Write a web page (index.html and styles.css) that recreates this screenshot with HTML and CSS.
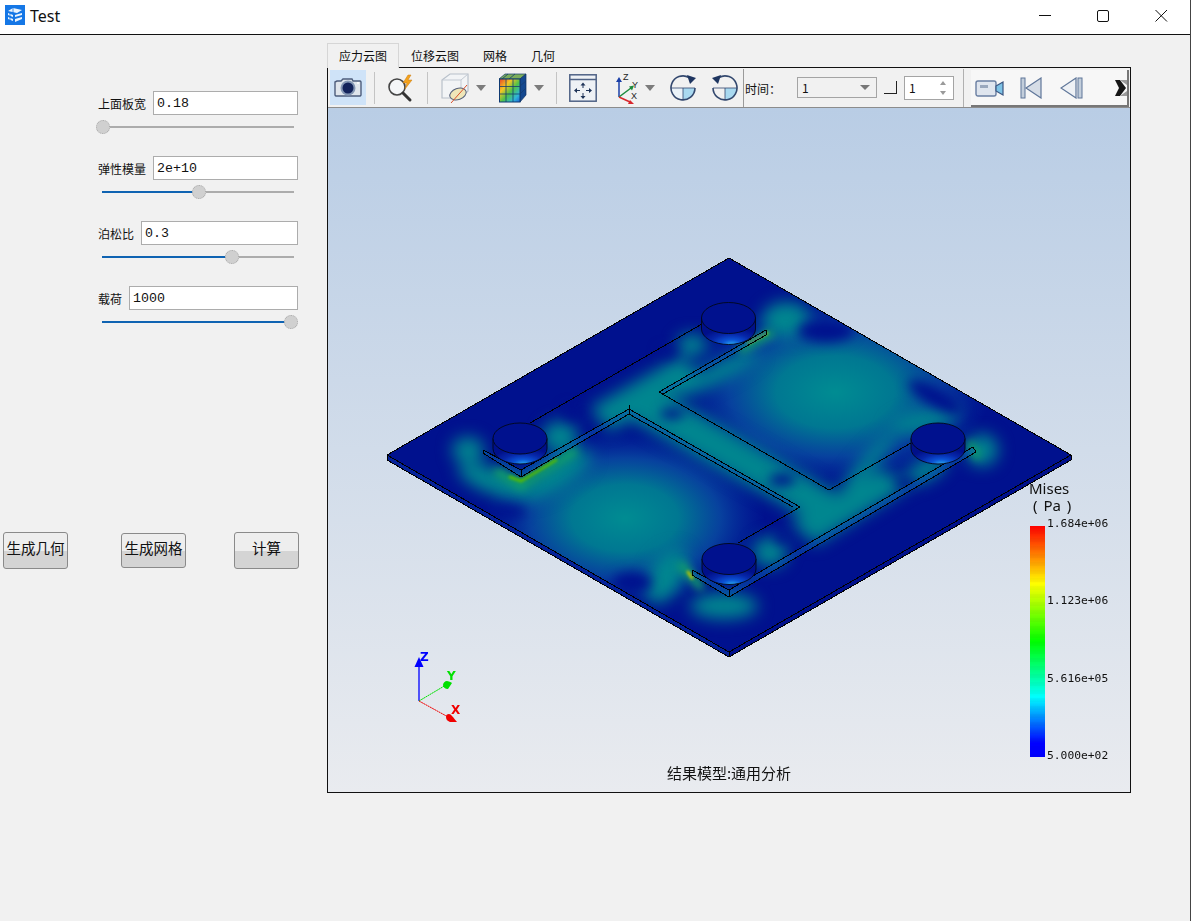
FILE: index.html
```html
<!DOCTYPE html>
<html lang="zh">
<head>
<meta charset="utf-8">
<title>Test</title>
<link rel="stylesheet" href="styles.css">
</head>
<body>
<div class="window">
  <header class="titlebar">
    <svg class="app-icon" width="20" height="20" viewBox="0 0 20 20">
      <rect width="20" height="20" fill="#1577e6"/>
      <path d="M3 6l5-3 9 2-5 3zM3 8l5 2v2l-5-2zM10 10l7-2v2l-7 2zM3 12l5 2v2l-5-2zM10 14l7-2v2l-7 3z" fill="#fff" opacity=".92"/>
      <path d="M5 8v9M8 3v6" stroke="#1577e6" stroke-width=".8"/>
    </svg>
    <span class="app-title">Test</span>
    <div class="win-controls">
      <svg width="58" height="28" viewBox="0 0 58 28"><path d="M23 14.500h12" stroke="#111" stroke-width="1"/></svg>
      <svg width="58" height="28" viewBox="0 0 58 28"><rect x="23.500" y="9.500" width="11" height="11" rx="1.500" fill="none" stroke="#111" stroke-width="1"/></svg>
      <svg width="58" height="28" viewBox="0 0 58 28"><path d="M23.500 9l11.500 11.500M35 9L23.500 20.500" stroke="#111" stroke-width="1"/></svg>
    </div>
  </header>

  <main class="content">
    <aside class="controls">
      <section class="param">
        <div class="param-row"><label class="param-label">上面板宽</label><div class="field">0.18</div></div>
        <div class="slider"><div class="slider-fill" style="width:1px"><span class="slider-knob"></span></div></div>
      </section>
      <section class="param">
        <div class="param-row"><label class="param-label">弹性模量</label><div class="field">2e+10</div></div>
        <div class="slider"><div class="slider-fill" style="width:97px"><span class="slider-knob"></span></div></div>
      </section>
      <section class="param">
        <div class="param-row"><label class="param-label">泊松比</label><div class="field">0.3</div></div>
        <div class="slider"><div class="slider-fill" style="width:130px"><span class="slider-knob"></span></div></div>
      </section>
      <section class="param">
        <div class="param-row"><label class="param-label">载荷</label><div class="field">1000</div></div>
        <div class="slider"><div class="slider-fill" style="width:189px"><span class="slider-knob"></span></div></div>
      </section>
      <div class="actions">
        <button class="action">生成几何</button>
        <button class="action action-mid">生成网格</button>
        <button class="action">计算</button>
      </div>
    </aside>

    <section class="workspace">
      <nav class="tabs">
        <span class="tab tab-active">应力云图</span>
        <span class="tab">位移云图</span>
        <span class="tab">网格</span>
        <span class="tab">几何</span>
      </nav>
      <div class="frame">
        <div class="toolbar">
          <div class="tool tool-camera">
            <svg width="36" height="35" viewBox="0 0 36 35">
              <path d="M7 11h4l2-2h9l1 2h7a1.500 1.500 0 0 1 1 1v13a1.500 1.500 0 0 1-1 1H6a1.500 1.500 0 0 1-1-1V12z" fill="#dfe5ec" stroke="#4d5d7c" stroke-width="1.400"/>
              <circle cx="18" cy="18" r="7.500" fill="#8497b4"/>
              <circle cx="18" cy="18" r="5.500" fill="#13235b"/>
              <circle cx="28" cy="13" r="1" fill="#fff"/>
            </svg>
          </div>
          <span class="sep sep-a"></span>
          <div class="tool tool-zoom">
            <svg width="30" height="30" viewBox="0 0 30 30">
              <circle cx="11" cy="14" r="8" fill="#f4f6f8" stroke="#444" stroke-width="1.600"/>
              <path d="M17 20l7 7" stroke="#333" stroke-width="3" stroke-linecap="round"/>
              <path d="M22 2l-5 8h4l-2 6 7-9h-4l3-5z" fill="#f4a21c" stroke="#c97a10" stroke-width=".5"/>
            </svg>
          </div>
          <span class="sep sep-b"></span>
          <div class="tool tool-cube">
            <svg width="30" height="32" viewBox="0 0 30 32">
              <path d="M2 8l8-6h18v17l-7 7H2z" fill="#f2f4f6" stroke="#b8c0ca" stroke-width="1.200"/>
              <path d="M2 8h19v18M21 8l7-6" fill="none" stroke="#c2c9d2" stroke-width="1"/>
              <ellipse cx="18" cy="22" rx="8.500" ry="5.500" fill="#efe6b8" stroke="#55617a" stroke-width="1" transform="rotate(-20 18 22)"/>
              <path d="M11 31L27 13" stroke="#d9502a" stroke-width="1"/>
            </svg>
            <svg class="caret" width="10" height="6" viewBox="0 0 10 6"><path d="M0 0h10L5 6z" fill="#7c7c7c"/></svg>
          </div>
          <div class="tool tool-color">
            <svg width="28" height="30" viewBox="0 0 28 30">
              <defs><linearGradient id="rainbow" x1="0" y1="0" x2="1" y2="1"><stop offset="0" stop-color="#e8432a"/><stop offset=".3" stop-color="#f5c623"/><stop offset=".55" stop-color="#4ec24a"/><stop offset=".8" stop-color="#2fb6d8"/><stop offset="1" stop-color="#1e60d8"/></linearGradient></defs>
              <path d="M0 6l6-5h21l-6 5z" fill="#7cae5a" stroke="#123a6a" stroke-width=".7"/>
              <path d="M21 6l6-5v21l-6 7z" fill="#14488f" stroke="#0f2f5e" stroke-width=".7"/>
              <rect x="0.500" y="6" width="20.500" height="23" fill="url(#rainbow)" stroke="#0f3a72" stroke-width="1"/>
              <path d="M7 6v23M14 6v23M1 13.500h20M1 21h20M9 1L3 6M16 1l-6 5M21 13l6-5M21 21l6-6" stroke="#143c70" stroke-width=".8"/>
            </svg>
            <svg class="caret" width="10" height="6" viewBox="0 0 10 6"><path d="M0 0h10L5 6z" fill="#7c7c7c"/></svg>
          </div>
          <span class="sep sep-c"></span>
          <div class="tool tool-fit">
            <svg width="28" height="28" viewBox="0 0 28 28">
              <rect x=".8" y=".8" width="26.400" height="26.400" fill="#eef1f5" stroke="#4f6285" stroke-width="1.500"/>
              <path d="M1 5.500h26" stroke="#4f6285" stroke-width="1.500"/>
              <path d="M14 8.500l2.500 3h-5zM14 25l-2.500-3h5zM5 16.500l3-2.500v5zM23 16.500l-3-2.500v5z" fill="#1e3358"/>
              <path d="M14 11v3M14 19v3M8 16.500h3M17 16.500h3" stroke="#1e3358" stroke-width="1"/>
            </svg>
          </div>
          <div class="tool tool-axes">
            <svg width="26" height="32" viewBox="0 0 26 32">
              <path d="M6 25V9" stroke="#1a3fa8" stroke-width="1.500"/><path d="M6 5l3 5H3z" fill="#1a3fa8"/>
              <path d="M6 25l12-9" stroke="#1e8a3c" stroke-width="1.500"/><path d="M21 13.500l-2 5-3-4z" fill="#1e8a3c"/>
              <path d="M6 25l11 5" stroke="#d8262c" stroke-width="1.500"/><path d="M21 32l-6 0 2-4z" fill="#d8262c"/>
              <text class="axis-letter" x="10" y="8">Z</text><text class="axis-letter" x="19" y="16">Y</text><text class="axis-letter" x="18" y="27">X</text>
            </svg>
            <svg class="caret" width="10" height="6" viewBox="0 0 10 6"><path d="M0 0h10L5 6z" fill="#7c7c7c"/></svg>
          </div>
          <div class="tool tool-rot">
            <svg width="28" height="28" viewBox="0 0 28 28">
              <path d="M14 14V26A12 12 0 0 1 2 14z" fill="#eaf2f8"/><path d="M14 14h12A12 12 0 0 1 14 26z" fill="#a9d9f0"/>
              <path d="M20 3.500A12 12 0 1 0 26 14" fill="none" stroke="#33486e" stroke-width="1.600"/>
              <path d="M18 1l9 3-6 6z" fill="#1e3560"/>
              <path d="M2 14h24M14 14v12" stroke="#33486e" stroke-width=".8"/>
            </svg>
          </div>
          <div class="tool tool-rot-b">
            <svg width="28" height="28" viewBox="0 0 28 28">
              <path d="M14 14h12A12 12 0 0 1 14 26z" fill="#a9d9f0"/>
              <path d="M8 3.500A12 12 0 1 1 2 14" fill="none" stroke="#33486e" stroke-width="1.600"/>
              <path d="M10 1L1 4l6 6z" fill="#1e3560"/>
              <path d="M2 14h24M14 14v12" stroke="#33486e" stroke-width=".8"/>
            </svg>
          </div>
          <span class="sep sep-d"></span>
          <span class="time-label">时间：</span>
          <div class="combo"><span>1</span><svg width="10" height="5" viewBox="0 0 10 5"><path d="M0 0h10L5 5z" fill="#777"/></svg></div>
          <span class="checkmark"></span>
          <div class="spin"><span>1</span><svg width="6" height="14" viewBox="0 0 6 14"><path d="M3 0l3 4H0zM3 14l3-4H0z" fill="#9a9a9a"/></svg></div>
          <span class="sep sep-e"></span>
          <div class="player">
            <svg class="play-cam" width="30" height="18" viewBox="0 0 30 18">
              <rect x="1" y="2" width="20" height="15" rx="2" fill="#dfe5ee" stroke="#6a7fa2" stroke-width="1.400"/>
              <rect x="5" y="6" width="8" height="3" fill="#9aa8bd"/>
              <path d="M21 7l7-4v13l-7-4z" fill="#7ec3e6" stroke="#3b5580" stroke-width="1.200"/>
            </svg>
            <svg class="play-first" width="22" height="22" viewBox="0 0 22 22">
              <rect x="1" y="1" width="4" height="20" fill="#c3cedb" stroke="#5f7699"/>
              <path d="M21 1v20L6 11z" fill="#d6dde6" stroke="#5f7699" stroke-width="1.200"/>
            </svg>
            <svg class="play-prev" width="24" height="22" viewBox="0 0 24 22">
              <path d="M16 1v20L1 11z" fill="#eef1f5" stroke="#5f7699" stroke-width="1.200"/>
              <rect x="18" y="1" width="4" height="20" fill="#c3cedb" stroke="#5f7699"/>
            </svg>
            <svg class="play-more" width="12" height="20" viewBox="0 0 12 20">
              <path d="M0 2h5l6 8-6 8H0l4-8z" fill="#161616"/><path d="M5 2h7v5zM5 18h7v-5z" fill="#9b9b9b"/>
            </svg>
          </div>
        </div>

        <div class="view">
          <svg class="scene" width="802" height="684" viewBox="328 108 802 684">
            <defs>
              <filter id="b9" x="-60%" y="-60%" width="220%" height="220%" color-interpolation-filters="sRGB"><feGaussianBlur stdDeviation="8"/></filter>
              <filter id="b7" x="-60%" y="-60%" width="220%" height="220%" color-interpolation-filters="sRGB"><feGaussianBlur stdDeviation="6"/></filter>
              <filter id="b4" x="-60%" y="-60%" width="220%" height="220%" color-interpolation-filters="sRGB"><feGaussianBlur stdDeviation="4"/></filter>
              <filter id="b2" x="-60%" y="-60%" width="220%" height="220%" color-interpolation-filters="sRGB"><feGaussianBlur stdDeviation="1.500"/></filter>
              <clipPath id="plate-clip"><path d="M387 455L729 258L1071 455L729 652z"/></clipPath>
              <radialGradient id="field">
                <stop offset="0" stop-color="#008c92"/><stop offset=".38" stop-color="#007c92" stop-opacity=".96"/>
                <stop offset=".68" stop-color="#0848a0" stop-opacity=".88"/><stop offset="1" stop-color="#0530a0" stop-opacity="0"/>
              </radialGradient>
            </defs>

            <defs>
              <radialGradient id="cyl" cx=".56" cy="1" r=".62">
                <stop offset="0" stop-color="#2aa8f0"/><stop offset=".3" stop-color="#0b52d4"/>
                <stop offset=".65" stop-color="#0626a8"/><stop offset="1" stop-color="#00108a"/>
              </radialGradient>
            </defs>

            <path d="M387 455L729 652V657L387 460z" fill="#05229a"/>
            <path d="M729 652L1071 455V460L729 657z" fill="#00108c"/>

            <g clip-path="url(#plate-clip)">
              <rect x="380" y="250" width="700" height="410" fill="#00118e"/>
              <ellipse cx="835" cy="392" rx="155" ry="95" fill="url(#field)"/>
              <ellipse cx="625" cy="518" rx="140" ry="88" fill="url(#field)"/>
              <g filter="url(#b9)" fill="#00868f">
                <path d="M630 386L662 392L842 496L815 522L735 478L610 408z"/>
                <path d="M590 408L680 356L700 374L610 432z"/>
                <path d="M790 522L880 468L910 486L815 545z"/>
                <ellipse cx="560" cy="437" rx="18" ry="16"/>
                <ellipse cx="692" cy="345" rx="15" ry="11"/>
                <ellipse cx="770" cy="552" rx="17" ry="15"/>
                <ellipse cx="926" cy="470" rx="24" ry="10" transform="rotate(-30 926 470)"/>
                <ellipse cx="786" cy="320" rx="24" ry="18"/>
                <ellipse cx="716" cy="374" rx="48" ry="9" transform="rotate(-26 716 374)"/>
                <ellipse cx="496" cy="482" rx="40" ry="13" transform="rotate(20 496 482)"/>
                <ellipse cx="556" cy="476" rx="42" ry="13" transform="rotate(-33 556 476)"/>
                <ellipse cx="468" cy="450" rx="16" ry="13"/>
                <ellipse cx="666" cy="576" rx="17" ry="30" transform="rotate(30 666 576)"/>
                <ellipse cx="724" cy="606" rx="34" ry="13"/>
                <ellipse cx="982" cy="450" rx="16" ry="16"/>
                <ellipse cx="925" cy="420" rx="36" ry="10" transform="rotate(-12 925 420)"/>
                <ellipse cx="868" cy="462" rx="38" ry="7" transform="rotate(-48 868 462)"/>
              </g>
              <g filter="url(#b7)" fill="#00118e">
                <ellipse cx="826" cy="331" rx="28" ry="11"/>
                <ellipse cx="935" cy="397" rx="30" ry="9" transform="rotate(30 935 397)"/>
                <ellipse cx="508" cy="512" rx="18" ry="6"/>
                <ellipse cx="632" cy="582" rx="20" ry="10"/>
                <ellipse cx="572" cy="412" rx="10" ry="7"/>
                <ellipse cx="668" cy="352" rx="10" ry="5"/>
                <ellipse cx="672" cy="414" rx="12" ry="5"/>
                <ellipse cx="782" cy="480" rx="13" ry="6"/>
                <ellipse cx="905" cy="483" rx="10" ry="5"/>
                <ellipse cx="782" cy="538" rx="8" ry="5"/>
              </g>
              <g filter="url(#b4)" fill="none" stroke-linecap="round">
                <path d="M498 472L521 486L574 452" stroke="#12a468" stroke-width="8"/>
                <path d="M742 349L770 334" stroke="#12a468" stroke-width="8"/>
                <path d="M682 566L700 586" stroke="#12a468" stroke-width="8"/>
                <path d="M970 444L977 456" stroke="#12a468" stroke-width="7"/>
              </g>
              <g filter="url(#b2)" fill="none" stroke-linecap="round">
                <path d="M510 477L521 481L556 460" stroke="#55c000" stroke-width="3"/>
                <path d="M748 343L767 333" stroke="#8ccb00" stroke-width="3"/>
                <path d="M688 572L692 578" stroke="#c0c800" stroke-width="3"/>
              </g>
            </g>

            <g class="raised">
              <path d="M483 450L521 470V477L483 453z"/>
              <path d="M521 470L629 409V414L521 477z"/>
              <path d="M629 409L800 507H793L629 414z"/>
              <path d="M659 392L766 330V335L663 394z"/>
              <path d="M729 590L973 447L976 452L729 597z"/>
              <path d="M692 570L729 590V597L692 575z"/>
            </g>

            <g class="outline">
              <path d="M387 455L729 258L1071 455V460L729 657L387 460z"/>
              <path d="M387 455L729 652L1071 455M729 652V657"/>
              <path d="M530 423L702 324M659 392L766 330M663 394L766 335M766 330V335"/>
              <path d="M483 450L521 470L629 409L800 507L738 543M483 453L521 477L629 414L793 507M483 450V453M521 470V477M629 405V414"/>
              <path d="M659 392L829 490L911 443"/>
              <path d="M692 570L729 590L973 447L976 452L729 597L692 575zM729 590V597"/>
            </g>

            <g class="cylinder" transform="translate(520 438.500)">
              <path d="M-27 0V10A27 15.500 0 0 0 27 10V0z"/><ellipse rx="27" ry="15.500"/>
            </g>
            <g class="cylinder" transform="translate(728.500 318)">
              <path d="M-27 0V11A27 15.500 0 0 0 27 11V0z"/><ellipse rx="27" ry="15.500"/>
            </g>
            <g class="cylinder" transform="translate(938 438.500)">
              <path d="M-27 0V10A27 15.500 0 0 0 27 10V0z"/><ellipse rx="27" ry="15.500"/>
            </g>
            <g class="cylinder" transform="translate(729 559)">
              <path d="M-27 0V10A27 15.500 0 0 0 27 10V0z"/><ellipse rx="27" ry="15.500"/>
            </g>

            <g class="triad">
              <path d="M419 701V664" stroke="#0000ff" stroke-width="1.300"/>
              <path d="M419 701L446 685" stroke="#00e000" stroke-dasharray="2 .5"/>
              <path d="M419 701L450 718" stroke="#f00000" stroke-dasharray="2 .5"/>
              <path d="M419 657l4.500 10h-9z" fill="#0000ff"/>
              <path d="M447 681c3 1 4 1 5 2l-4 6c-3 0-5-2-5-4 0-2 2-4 4-4z" fill="#00e000"/>
              <path d="M449 714c2 0 4 3 8 8h-7c-3-1-4-3-4-5 0-2 1-3 3-3z" fill="#f00000"/>
              <text class="triad-z" x="420" y="661">Z</text>
              <text class="triad-y" x="447" y="680">Y</text>
              <text class="triad-x" x="451" y="714">X</text>
            </g>
          </svg>

          <div class="legend">
            <div class="legend-title">Mises</div>
            <div class="legend-unit">( Pa )</div>
            <div class="legend-scale">
              <div class="legend-bar"></div>
              <div class="legend-ticks"><span>1.684e+06</span><span>1.123e+06</span><span>5.616e+05</span><span>5.000e+02</span></div>
            </div>
          </div>
          <div class="caption">结果模型:通用分析</div>
        </div>
      </div>
    </section>
  </main>
</div>
</body>
</html>
```

FILE: styles.css
```css
* { box-sizing: border-box; }

html, body { margin: 0; height: 100%; background: #fff; overflow: hidden; }

body { font-family: "Noto Sans CJK SC", "Noto Sans", sans-serif; font-size: 12px; color: #111; }

.window {
  width: 1191px;
  height: 921px;
  display: flex;
  flex-direction: column;
  background: #f1f1f1;
  border-right: 1px solid #444;
}

.titlebar {
  height: 35px;
  flex: none;
  display: flex;
  align-items: center;
  background: #fff;
  border-bottom: 1px solid #111;
  padding: 0 0 0 5px;
}

.app-icon { flex: none; margin-top: -5px; }

.app-title { margin: -3px 0 0 5px; font: 16px/20px "Noto Sans", sans-serif; color: #111; }

.win-controls { margin-left: auto; display: flex; margin-top: -5px; }

.content { flex: 1; display: flex; min-height: 0; }

.controls {
  width: 327px;
  flex: none;
  display: flex;
  flex-direction: column;
  gap: 28px;
  padding: 56px 29px 0 98px;
}

.param-row { display: flex; align-items: center; gap: 7px; height: 24px; }

.param-label { font-size: 12px; white-space: nowrap; }

.field {
  flex: 1;
  height: 24px;
  padding: 1px 0 0 3px;
  background: #fff;
  border: 1px solid #acacac;
  font: 13.3px/22px "Liberation Mono", monospace;
}

.slider { height: 2px; margin: 11px 4px 0 4px; background: #acacac; }

.slider-fill { position: relative; height: 2px; background: #0f63b2; }

.slider-knob {
  position: absolute;
  right: -7px;
  top: -6px;
  width: 14px;
  height: 14px;
  border-radius: 50%;
  background: #d0d0d0;
  border: 1px dotted #a8a8a8;
}

.actions {
  display: flex;
  align-items: flex-start;
  margin: 181px -29px 0 -95px;
}

.action {
  width: 65px;
  height: 37px;
  padding: 0 0 4px;
  border: 1px solid #8a8a8a;
  border-radius: 3px;
  background: linear-gradient(#eeeeee 0, #eeeeee 52%, #d4d4d4 52%, #d4d4d4 100%);
  font: 14.5px/1 "Noto Sans CJK SC", sans-serif;
  color: #111;
}

.action-mid { height: 35px; margin: 1px 48px 0 53px; }

.workspace { width: 804px; flex: none; padding-top: 8px; }

.tabs { display: flex; height: 25px; position: relative; z-index: 1; }

.tab { padding: 0 12px; line-height: 25px; font-size: 12px; }

.tab-active { border: 1px solid #d6d6d6; border-bottom: none; padding: 0 11px; line-height: 24px; background: #f1f1f1; }

.frame {
  height: 726px;
  margin-top: -1px;
  border: 1px solid #111;
  display: flex;
  flex-direction: column;
}

.toolbar {
  height: 40px;
  flex: none;
  display: flex;
  align-items: center;
  background: #f1f1f1;
  border-bottom: 1px solid #8c8c8c;
}

.tool { display: flex; align-items: center; flex: none; }

.tool-camera { width: 36px; height: 35px; margin-left: 2px; background: #cfe3f8; }

.tool-zoom { margin-left: 11px; }
.tool-cube { margin-left: 12px; gap: 6px; }
.tool-color { margin-left: 13px; gap: 7px; }
.tool-fit { margin-left: 12px; }
.tool-axes { margin-left: 16px; gap: 6px; }
.tool-rot { margin-left: 14px; }
.tool-rot-b { margin-left: 14px; }

.axis-letter { font: 9px "Liberation Sans", sans-serif; fill: #222; }

.sep { width: 1px; height: 32px; background: #c4c4c4; flex: none; }
.sep-a { margin-left: 8px; }
.sep-b { margin-left: 11px; }
.sep-c { margin-left: 12px; }
.sep-d { margin-left: 4px; height: 38px; background: #9a9a9a; }
.sep-e { margin-left: 9px; height: 38px; background: #b0b0b0; }

.time-label { margin: 2px 0 0 1px; width: 52px; font-size: 12px; flex: none; }

.combo {
  width: 80px;
  height: 21px;
  flex: none;
  border: 1px solid #a4a4a4;
  display: flex;
  align-items: center;
  justify-content: space-between;
  padding: 0 6px 0 4px;
  font-size: 12px;
}

.checkmark {
  width: 13px;
  height: 13px;
  margin-left: 7px;
  flex: none;
  border-right: 1px solid #222;
  border-bottom: 1px solid #222;
}

.spin {
  width: 50px;
  height: 24px;
  margin-left: 7px;
  flex: none;
  background: #fff;
  border: 1px solid #a4a4a4;
  display: flex;
  align-items: center;
  justify-content: space-between;
  padding: 0 7px 0 4px;
  font-size: 12px;
}

.player {
  width: 158px;
  height: 37px;
  margin-left: 7px;
  flex: none;
  align-self: flex-start;
  margin-top: 2px;
  display: flex;
  align-items: center;
  background: #f7f7f7;
  border-right: 2px solid #777;
  border-bottom: 2px solid #777;
}

.play-cam { margin-left: 4px; }
.play-first { margin-left: 15px; }
.play-prev { margin-left: 18px; }
.play-more { margin-left: 31px; }

.view {
  flex: 1;
  position: relative;
  min-height: 0;
  background: linear-gradient(#b9cde5 0%, #e9ebef 100%);
  overflow: hidden;
}

.scene { display: block; }

.raised path { fill: #0a5ab4; fill-opacity: .45; }

.outline path { fill: none; stroke: #000; stroke-width: 1; shape-rendering: crispEdges; }

.cylinder path { fill: url(#cyl); stroke: #020818; stroke-width: .9; }
.cylinder ellipse { fill: #00118e; stroke: #020818; stroke-width: .9; }

.triad text { font: bold 12px "DejaVu Sans", sans-serif; }
.triad-z { fill: #0000ff; }
.triad-y { fill: #00e000; }
.triad-x { fill: #f00000; }

.legend { position: absolute; left: 702px; top: 372px; width: 90px; }

.legend-title { margin-left: -1px; font: 15px/17px "Noto Sans", sans-serif; color: #111; }
.legend-unit { font: 15px/17px "Noto Sans", sans-serif; color: #111; padding-left: 3px; word-spacing: 2px; }

.legend-scale { display: flex; margin-top: 2px; gap: 2px; }

.legend-bar {
  width: 15px;
  height: 231px;
  margin-top: 10px;
  background:
    repeating-linear-gradient(transparent 0 4px, rgba(0, 0, 0, .02) 4px 8px),
    linear-gradient(#ff0000 0%, #ffff00 25%, #00ff00 50%, #00ffff 74%, #0000ff 94%, #0000ff 100%);
}

.legend-ticks {
  height: 246px;
  margin-top: 1px;
  display: flex;
  flex-direction: column;
  justify-content: space-between;
  font: 11.3px/14px "DejaVu Sans Mono", monospace;
  color: #111;
}

.caption {
  position: absolute;
  left: 0;
  right: 0;
  top: 655px;
  text-align: center;
  font-size: 15px;
  line-height: 20px;
  color: #111;
}
```
